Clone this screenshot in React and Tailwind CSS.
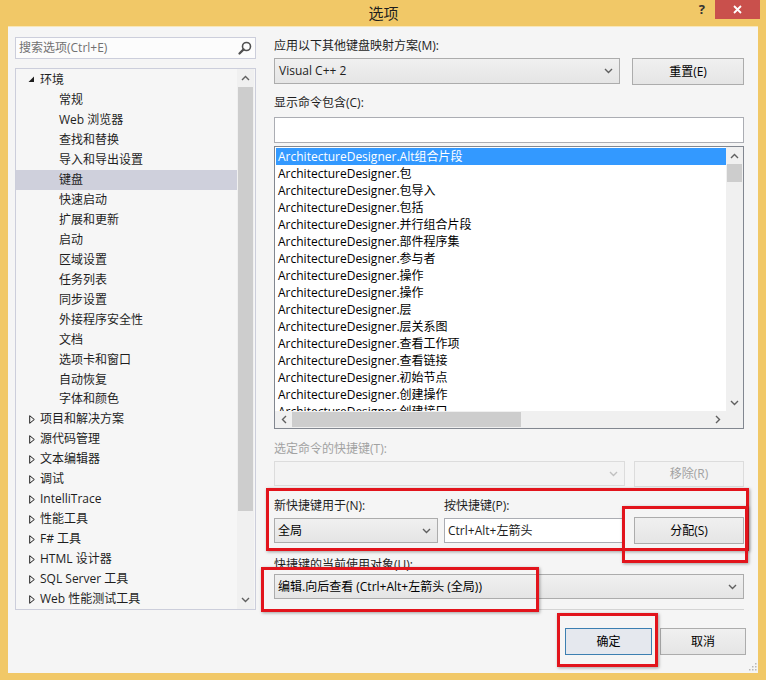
import React from "react";

const FONT = "font-['Open_Sans','Noto_Sans_CJK_SC',sans-serif]";

function ChevronDown({ className = "" }) {
  return (
    <svg width="9" height="6" viewBox="0 0 9 6" className={className}>
      <polyline points="1,1 4.5,4.5 8,1" fill="none" stroke="#606060" strokeWidth="1.4" />
    </svg>
  );
}
function ChevronUp({ className = "" }) {
  return (
    <svg width="9" height="6" viewBox="0 0 9 6" className={className}>
      <polyline points="1,5 4.5,1.5 8,5" fill="none" stroke="#606060" strokeWidth="1.4" />
    </svg>
  );
}
function ChevronLeft() {
  return (
    <svg width="6" height="9" viewBox="0 0 6 9">
      <polyline points="5,1 1.5,4.5 5,8" fill="none" stroke="#606060" strokeWidth="1.4" />
    </svg>
  );
}
function ChevronRight() {
  return (
    <svg width="6" height="9" viewBox="0 0 6 9">
      <polyline points="1,1 4.5,4.5 1,8" fill="none" stroke="#606060" strokeWidth="1.4" />
    </svg>
  );
}

function Combo({ text, w, disabled }) {
  return (
    <div
      className={`h-[25px] ${w} flex items-center justify-between pl-[3px] pr-[6px] border ${
        disabled ? "border-[#dcdcdc] bg-[#f3f3f3]" : "border-[#acacac] bg-[linear-gradient(#f0f0f0,#e5e5e5)]"
      }`}
    >
      <span className="text-[12px] text-[#000] leading-[16px] whitespace-nowrap">{text}</span>
      <svg width="9" height="6" viewBox="0 0 9 6">
        <polyline points="1,1 4.5,4.5 8,1" fill="none" stroke={disabled ? "#c0c0c0" : "#606060"} strokeWidth="1.4" />
      </svg>
    </div>
  );
}

function Btn({ text, w, h = "h-[27px]", disabled, primary }) {
  return (
    <div
      className={`${h} ${w} flex items-center justify-center border text-[12px] ${
        disabled
          ? "border-[#dcdcdc] bg-[#f3f3f3] text-[#a2a2a2]"
          : primary
          ? "border-[#3c7fb1] bg-[#e5e8ee] text-[#000]"
          : "border-[#acacac] bg-[linear-gradient(#f0f0f0,#e5e5e5)] text-[#000]"
      }`}
    >
      {text}
    </div>
  );
}

const treeRows = [
  { t: "环境", l: 1, open: true },
  { t: "常规", l: 2 },
  { t: "Web 浏览器", l: 2 },
  { t: "查找和替换", l: 2 },
  { t: "导入和导出设置", l: 2 },
  { t: "键盘", l: 2, sel: true },
  { t: "快速启动", l: 2 },
  { t: "扩展和更新", l: 2 },
  { t: "启动", l: 2 },
  { t: "区域设置", l: 2 },
  { t: "任务列表", l: 2 },
  { t: "同步设置", l: 2 },
  { t: "外接程序安全性", l: 2 },
  { t: "文档", l: 2 },
  { t: "选项卡和窗口", l: 2 },
  { t: "自动恢复", l: 2 },
  { t: "字体和颜色", l: 2 },
  { t: "项目和解决方案", l: 1 },
  { t: "源代码管理", l: 1 },
  { t: "文本编辑器", l: 1 },
  { t: "调试", l: 1 },
  { t: "IntelliTrace", l: 1 },
  { t: "性能工具", l: 1 },
  { t: "F# 工具", l: 1 },
  { t: "HTML 设计器", l: 1 },
  { t: "SQL Server 工具", l: 1 },
  { t: "Web 性能测试工具", l: 1 },
];

const listItems = [
  "Alt组合片段",
  "包",
  "包导入",
  "包括",
  "并行组合片段",
  "部件程序集",
  "参与者",
  "操作",
  "操作",
  "层",
  "层关系图",
  "查看工作项",
  "查看链接",
  "初始节点",
  "创建操作",
  "创建接口",
];

function RedBox({ cls }) {
  return (
    <div
      className={`absolute ${cls} border-[3px] border-[#e2141c] shadow-[1px_1px_3px_rgba(0,0,0,0.35)] pointer-events-none`}
    />
  );
}

export default function App() {
  return (
    <div className={`relative w-[766px] h-[680px] bg-[#f1c867] overflow-hidden flex flex-col ${FONT}`}>
      {/* title bar */}
      <div className="h-[26px] grid grid-cols-[1fr_auto_1fr] items-start">
        <div />
        <div className="text-[15px] leading-[26px] text-[#1e1e1e] pl-[1px]">选项</div>
        <div className="flex justify-end items-start pr-[6px]">
          <span className="text-[13px] font-bold leading-[18px] text-[#333] mr-[10px] mt-[0px]">?</span>
          <div className="w-[45px] h-[19px] bg-[#c9504c] flex items-center justify-center">
            <svg width="9" height="9" viewBox="0 0 9 9">
              <path d="M1 1L8 8M8 1L1 8" stroke="#fff" strokeWidth="1.8" />
            </svg>
          </div>
        </div>
      </div>

      {/* content */}
      <div className="mx-[8px] h-[647px] bg-[#f5f5f5] border-t border-[#f8e7b9] flex text-[#1e1e1e]">
        {/* left column */}
        <div className="ml-[7px] mt-[10px] w-[241px] flex flex-col">
          <div className="h-[22px] bg-[#fcfcfc] border border-[#cccedb] flex items-center justify-between pl-[3px] pr-[3px]">
            <span className="text-[12px] text-[#717171] leading-[16px]">搜索选项(Ctrl+E)</span>
            <svg width="14" height="14" viewBox="0 0 14 14">
              <circle cx="8.5" cy="5.5" r="4" fill="none" stroke="#505050" strokeWidth="1.6" />
              <path d="M5.6 8.4L1.5 12.5" stroke="#505050" strokeWidth="2.2" strokeLinecap="round" />
            </svg>
          </div>
          <div className="mt-[9px] h-[542px] bg-[#f6f6f6] border border-[#cccedb] flex">
            <div className="flex-1 flex flex-col pt-[1px]">
              {treeRows.map((r, i) => (
                <div
                  key={i}
                  className={`h-[20px] flex items-center text-[12px] leading-[16px] text-[#1e1e1e] whitespace-nowrap ${
                    r.sel ? "bg-[#cfd0dc]" : ""
                  }`}
                >
                  {r.l === 1 ? (
                    <>
                      <span className="w-[24px] flex justify-end pr-[5px]">
                        {r.open ? (
                          <svg width="7" height="7" viewBox="0 0 7 7">
                            <polygon points="6,0.5 6,6 0.5,6" fill="#1e1e1e" />
                          </svg>
                        ) : (
                          <svg width="6" height="9" viewBox="0 0 6 9">
                            <polygon points="0.7,0.7 5.3,4.5 0.7,8.3" fill="none" stroke="#1e1e1e" strokeWidth="1" />
                          </svg>
                        )}
                      </span>
                      <span>{r.t}</span>
                    </>
                  ) : (
                    <span className="pl-[43px]">{r.t}</span>
                  )}
                </div>
              ))}
            </div>
            {/* vertical scrollbar */}
            <div className="w-[17px] mr-[1px] flex flex-col bg-[#f0f0f0]">
              <div className="h-[18px] flex items-center justify-center">
                <ChevronUp />
              </div>
              <div className="h-[424px] mx-[1px] bg-[#cdcdcd]" />
              <div className="flex-1" />
              <div className="h-[18px] flex items-center justify-center">
                <ChevronDown />
              </div>
            </div>
          </div>
        </div>

        {/* right column */}
        <div className="ml-[18px] w-[470px] flex flex-col">
          <div className="mt-[11px] text-[12px] leading-[16px]">应用以下其他键盘映射方案(M):</div>
          <div className="mt-[4px] flex items-start">
            <div className="h-[26px] w-[346px] flex items-center justify-between pl-[4px] pr-[6px] border border-[#acacac] bg-[linear-gradient(#f0f0f0,#e5e5e5)]">
              <span className="text-[12px] leading-[16px]">Visual C++ 2</span>
              <ChevronDown />
            </div>
            <div className="ml-[12px]">
              <Btn text="重置(E)" w="w-[112px]" />
            </div>
          </div>

          <div className="mt-[10px] text-[12px] leading-[16px]">显示命令包含(C):</div>
          <div className="mt-[6px] h-[26px] bg-white border border-[#abadb3]" />

          {/* command list */}
          <div className="mt-[3px] h-[283px] bg-white border border-[#828790] flex flex-col">
            <div className="h-[264px] flex">
              <div className="flex-1 overflow-hidden pt-[1px] pl-[1px]">
                {listItems.map((t, i) => (
                  <div
                    key={i}
                    className={`h-[17px] pl-[2px] flex items-center text-[12px] leading-[16px] whitespace-nowrap ${
                      i === 0 ? "bg-[#3399ff] text-white" : "text-[#000]"
                    }`}
                  >
                    ArchitectureDesigner.{t}
                  </div>
                ))}
              </div>
              <div className="w-[17px] flex flex-col bg-[#f0f0f0]">
                <div className="h-[17px] flex items-center justify-center">
                  <ChevronUp />
                </div>
                <div className="h-[18px] mx-[1px] bg-[#cdcdcd]" />
                <div className="flex-1" />
                <div className="h-[17px] flex items-center justify-center">
                  <ChevronDown />
                </div>
              </div>
            </div>
            <div className="flex-1 flex bg-[#f0f0f0]">
              <div className="w-[17px] flex items-center justify-center">
                <ChevronLeft />
              </div>
              <div className="w-[229px] my-[1px] bg-[#cdcdcd]" />
              <div className="flex-1" />
              <div className="w-[17px] flex items-center justify-center">
                <ChevronRight />
              </div>
              <div className="w-[17px] bg-[#f0f0f0]" />
            </div>
          </div>

          <div className="mt-[12px] text-[12px] leading-[16px] text-[#a2a2a2]">选定命令的快捷键(T):</div>
          <div className="mt-[4px] flex items-start">
            <Combo text="" w="w-[351px]" disabled />
            <div className="ml-[9px]">
              <Btn text="移除(R)" w="w-[110px]" h="h-[26px]" disabled />
            </div>
          </div>

          <div className="mt-[11px] flex text-[12px] leading-[16px]">
            <span className="w-[170px]">新快捷键用于(N):</span>
            <span>按快捷键(P):</span>
          </div>
          <div className="mt-[4px] flex items-start">
            <Combo text="全局" w="w-[164px]" />
            <div className="ml-[6px] h-[25px] w-[179px] bg-white border border-[#abadb3] flex items-center pl-[3px] text-[12px] leading-[16px]">
              Ctrl+Alt+左箭头
            </div>
            <div className="ml-[11px] -mt-[1px]">
              <Btn text="分配(S)" w="w-[110px]" />
            </div>
          </div>

          <div className="mt-[13px] text-[12px] leading-[16px]">快捷键的当前使用对象(U):</div>
          <div className="mt-[1px]">
            <Combo text="编辑.向后查看 (Ctrl+Alt+左箭头 (全局))" w="w-[470px]" />
          </div>

          <div className="mt-[10px] h-[1px] bg-[#d4d4d4]" />

          <div className="mt-[18px] flex justify-end -mr-[2px]">
            <Btn text="确定" w="w-[87px]" primary />
            <div className="ml-[8px]">
              <Btn text="取消" w="w-[86px]" />
            </div>
          </div>
        </div>
      </div>

      {/* resize grip */}
      <div className="absolute left-[748px] top-[662px]">
        <svg width="9" height="9" viewBox="0 0 9 9">
          <rect x="7" y="1" width="1.5" height="1.5" fill="#b8b8b8" />
          <rect x="4" y="4" width="1.5" height="1.5" fill="#b8b8b8" />
          <rect x="7" y="4" width="1.5" height="1.5" fill="#b8b8b8" />
          <rect x="1" y="7" width="1.5" height="1.5" fill="#b8b8b8" />
          <rect x="4" y="7" width="1.5" height="1.5" fill="#b8b8b8" />
          <rect x="7" y="7" width="1.5" height="1.5" fill="#b8b8b8" />
        </svg>
      </div>

      {/* red annotation boxes */}
      <RedBox cls="left-[266px] top-[488px] w-[483px] h-[63px]" />
      <RedBox cls="left-[622px] top-[506px] w-[126px] h-[57px]" />
      <RedBox cls="left-[261px] top-[567px] w-[278px] h-[45px]" />
      <RedBox cls="left-[557px] top-[613px] w-[101px] h-[54px]" />
    </div>
  );
}
